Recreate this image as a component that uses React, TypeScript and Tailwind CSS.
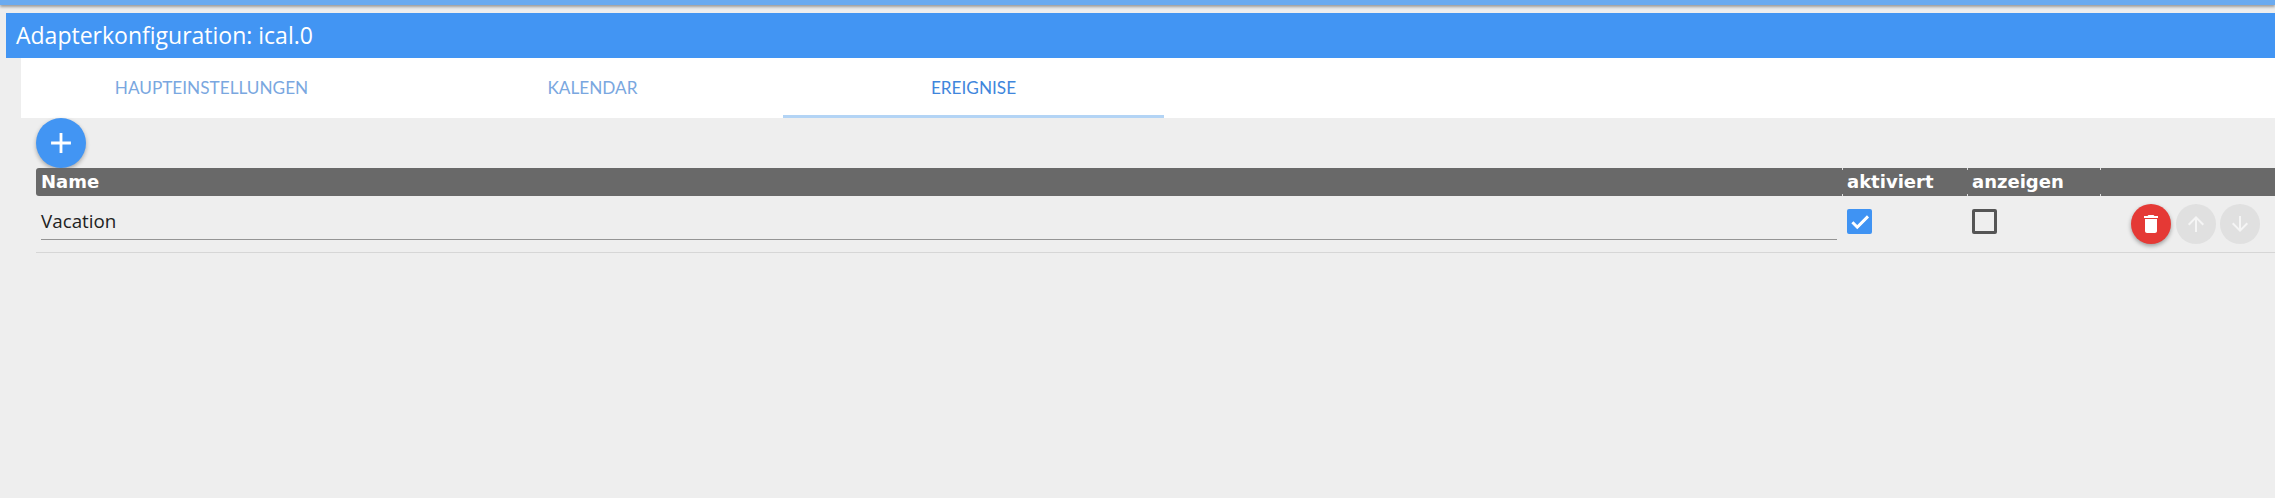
const TABS = [
  { label: "HAUPTEINSTELLUNGEN", active: false },
  { label: "KALENDAR", active: false },
  { label: "EREIGNISE", active: true },
];

const COLS = "grid grid-cols-[1806px_125px_133px_1fr]";

// material icons
function Icon({ d, size, className }: { d: string; size: number; className?: string }) {
  return (
    <svg width={size} height={size} viewBox="0 0 24 24" fill="currentColor" className={className}>
      <path d={d} />
    </svg>
  );
}

const ICON_PLUS = "M19 13h-6v6h-2v-6H5v-2h6V5h2v6h6v2z";
const ICON_CHECK = "M9 16.17L4.83 12l-1.42 1.41L9 19 21 7l-1.41-1.41z";
const ICON_DELETE = "M6 19c0 1.1.9 2 2 2h8c1.1 0 2-.9 2-2V7H6v12zM19 4h-3.5l-1-1h-5l-1 1H5v2h14V4z";
const ICON_UP = "M4 12l1.41 1.41L11 7.83V20h2V7.83l5.58 5.59L20 12l-8-8-8 8z";
const ICON_DOWN = "M20 12l-1.41-1.41L13 16.17V4h-2v12.17l-5.58-5.59L4 12l8 8 8-8z";

function HeadCell({ label, tick }: { label?: string; tick?: boolean }) {
  return (
    <div className="relative pl-[5px] text-[18px] font-bold leading-[28px] text-white [font-family:'DejaVu_Sans',sans-serif]">
      {tick && (
        <>
          <span className="absolute left-0 top-0 h-[2px] w-[1px] bg-[#ddd]" />
          <span className="absolute bottom-0 left-0 h-[2px] w-[1px] bg-[#ddd]" />
        </>
      )}
      {label}
    </div>
  );
}

export default function App() {
  return (
    <div className="h-[498px] w-[2275px] overflow-hidden bg-[#eeeeee] [font-family:'Open_Sans',sans-serif]">
      <div className="h-[5px] bg-[#6aaaf0] shadow-[0_2px_3px_rgba(0,0,0,0.35)]" />

      <div className="mt-[8px] ml-[6px] flex h-[45px] items-center bg-[#4295f3] pl-[10px] text-[23px] text-white">
        Adapterkonfiguration: ical.0
      </div>

      <div className="ml-[21px] flex h-[60px] bg-white [font-family:'Lato',sans-serif]">
        {TABS.map((tab) => (
          <div
            key={tab.label}
            className={
              tab.active
                ? "flex w-[381px] items-center justify-center border-b-[3px] border-[#b3d4f5] pt-[2px] text-[17.2px] text-[#3f86dc]"
                : "flex w-[381px] items-center justify-center border-b-[3px] border-transparent pt-[2px] text-[17.2px] text-[#7aa7e0]"
            }
          >
            {tab.label}
          </div>
        ))}
      </div>

      <div className="ml-[36px]">
        <button className="flex h-[50px] w-[50px] items-center justify-center rounded-full bg-[#4295f3] text-white shadow-[0_2px_4px_rgba(0,0,0,0.3)]">
          <Icon d={ICON_PLUS} size={34} />
        </button>

        <div className={`${COLS} h-[28px] rounded-l-[3px] bg-[#696969]`}>
          <HeadCell label="Name" />
          <HeadCell label="aktiviert" tick />
          <HeadCell label="anzeigen" tick />
          <HeadCell tick />
        </div>

        <div className={`${COLS} h-[57px] border-b border-[#d6d6d6]`}>
          <div className="pl-[5px] pr-[5px]">
            <div className="flex h-[44px] items-center border-b border-[#949494] pt-[7px] text-[18.8px] text-[#222]">
              Vacation
            </div>
          </div>
          <div className="pl-[5px] pt-[13px]">
            <span className="flex h-[25px] w-[25px] items-center justify-center rounded-[2px] bg-[#3f93f3] text-white">
              <Icon d={ICON_CHECK} size={22} className="stroke-white stroke-[1.2px]" />
            </span>
          </div>
          <div className="pl-[5px] pt-[13px]">
            <span className="block h-[25px] w-[25px] rounded-[2px] border-[3px] border-[#555]" />
          </div>
          <div className="flex gap-[4.5px] pl-[31px] pt-[8px]">
            <button className="flex h-[40px] w-[40px] items-center justify-center rounded-full bg-[#e53935] text-white shadow-[0_2px_4px_rgba(0,0,0,0.35)]">
              <Icon d={ICON_DELETE} size={24} />
            </button>
            <button className="flex h-[40px] w-[40px] items-center justify-center rounded-full bg-[#e0e0e0] text-[#f5f5f5]">
              <Icon d={ICON_UP} size={24} />
            </button>
            <button className="flex h-[40px] w-[40px] items-center justify-center rounded-full bg-[#e0e0e0] text-[#f5f5f5]">
              <Icon d={ICON_DOWN} size={24} />
            </button>
          </div>
        </div>
      </div>
    </div>
  );
}
